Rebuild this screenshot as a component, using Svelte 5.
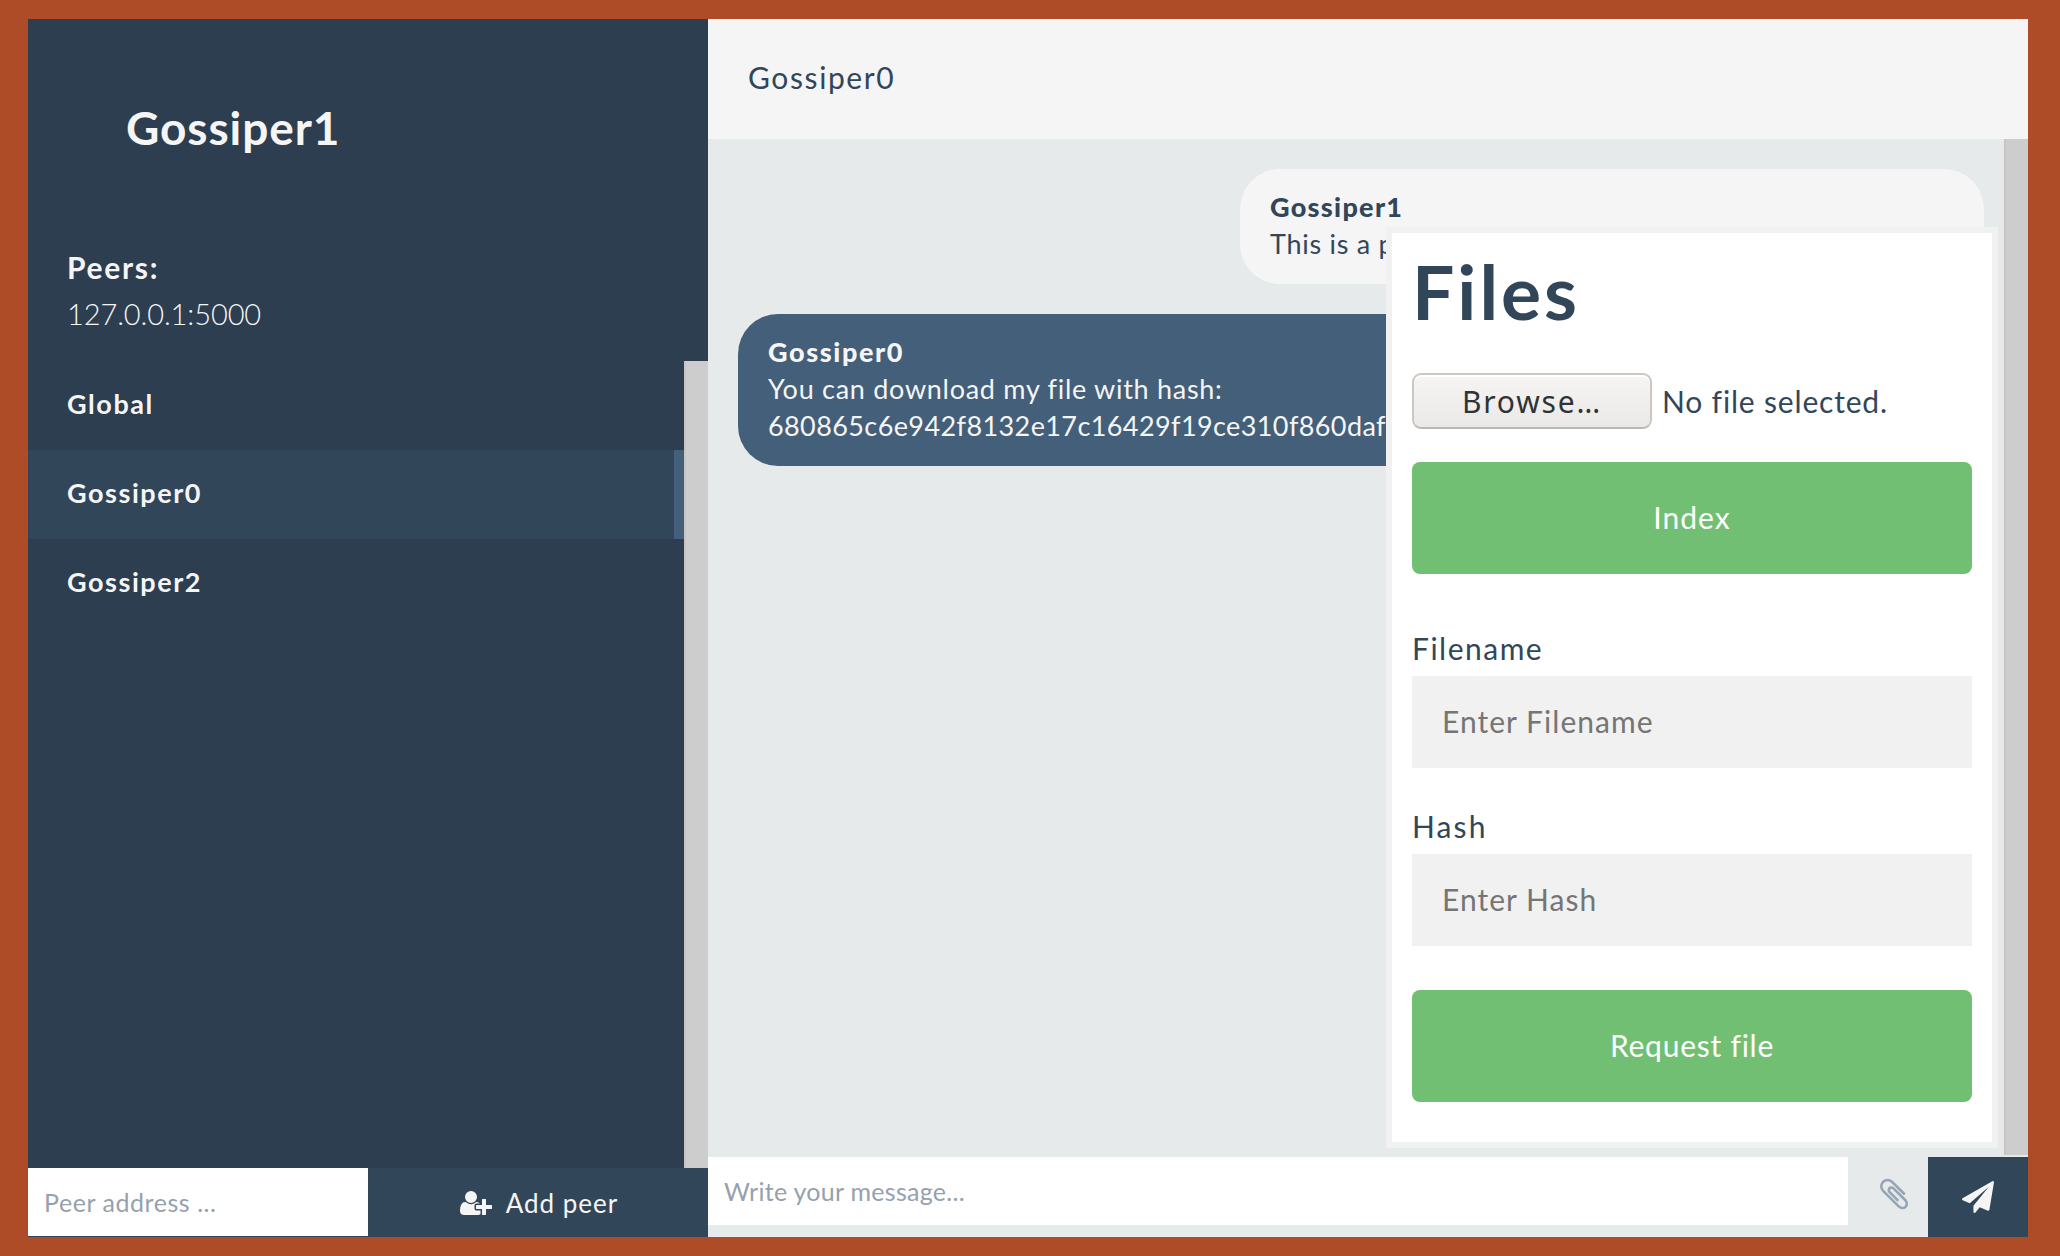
<script>
  const contacts = ['Global', 'Gossiper0', 'Gossiper2'];
  let selected = $state('Gossiper0');
  let peer = $state('');
  let message = $state('');
  let filename = $state('');
  let hash = $state('');
</script>

<div class="frame">
  <aside class="sidebar">
    <header class="profile">
      <h2>Gossiper1</h2>
      <div class="peers">
        <p class="peers-title">Peers:</p>
        <p class="peers-item">127.0.0.1:5000</p>
      </div>
    </header>
    <div class="contacts">
      <ul>
        {#each contacts as name}
          <li>
            <button class="contact" class:active={name === selected} onclick={() => (selected = name)}>{name}</button>
          </li>
        {/each}
      </ul>
      <div class="scrollbar"></div>
    </div>
    <div class="add-peer">
      <input placeholder="Peer address ..." bind:value={peer} />
      <button>
        <svg viewBox="0 0 2048 1792" aria-hidden="true"><path d="M704 896q-159 0-271.500-112.500t-112.500-271.500 112.500-271.500 271.500-112.500 271.500 112.500 112.500 271.500-112.500 271.500-271.500 112.500zM1664 1024h352q13 0 22.500 9.500t9.500 22.500v192q0 13-9.500 22.500t-22.500 9.500h-352v352q0 13-9.500 22.500t-22.500 9.500h-192q-13 0-22.500-9.500t-9.500-22.500v-352h-352q-13 0-22.500-9.500t-9.500-22.500v-192q0-13 9.500-22.500t22.500-9.500h352v-352q0-13 9.500-22.500t22.500-9.500h192q13 0 22.500 9.500t9.500 22.500v352zM928 1248q0 52 38 90t90 38h256v238q-68 50-171 50h-874q-121 0-194-69t-73-190q0-53 3.500-103.500t14-109 26.500-108.500 43-97.500 62-81 85.500-53.500 111.500-20q19 0 39 17 79 61 154.500 91.500t164.500 30.500 164.500-30.500 154.500-91.500q20-17 39-17 132 0 217 96h-223q-52 0-90 38t-38 90v192z" /></svg>
        <span>Add peer</span>
      </button>
    </div>
  </aside>

  <main class="content">
    <header class="topbar">Gossiper0</header>
    <div class="chat">
      <div class="messages">
        <div class="bubble sent">
          <strong>Gossiper1</strong>
          <p>This is a p</p>
        </div>
        <div class="bubble reply">
          <strong>Gossiper0</strong>
          <p>You can download my file with hash:</p>
          <p class="hash">680865c6e942f8132e17c16429f19ce310f860daf</p>
        </div>
      </div>
      <div class="scrollbar"></div>
    </div>
    <div class="composer">
      <input placeholder="Write your message..." bind:value={message} />
      <svg class="clip" viewBox="0 0 1792 1792" aria-hidden="true"><path d="M1596 1385q0 117-79 196t-196 79q-135 0-235-100l-777-776q-113-115-113-271 0-159 110-270t269-111q158 0 273 113l605 606q10 10 10 22 0 16-30.500 46.500t-46.500 30.500q-13 0-23-10l-606-607q-79-77-181-77-106 0-179 75t-73 181q0 105 76 181l776 777q63 63 145 63 64 0 106-42t42-106q0-82-63-145l-581-581q-26-24-60-24-29 0-48 19t-19 48q0 32 25 59l410 410q10 10 10 22 0 16-31 47t-47 31q-12 0-22-10l-410-410q-63-61-63-149 0-82 57-139t139-57q88 0 149 63l581 581q100 98 100 235z" /></svg>
      <button class="send" aria-label="Send">
        <svg viewBox="0 0 1792 1792" aria-hidden="true"><path d="M1764 11q33 24 27 64l-256 1536q-5 29-32 45-14 8-31 8-11 0-24-5l-453-185-242 295q-18 23-49 23-13 0-22-4-19-7-30.500-23.500t-11.500-36.500v-349l864-1059-1069 925-395-162q-37-14-40-55-2-40 32-59l1664-960q15-9 32-9 20 0 36 11z" /></svg>
      </button>
    </div>
    <form class="files" onsubmit={(e) => e.preventDefault()}>
      <h1>Files</h1>
      <div class="picker">
        <button type="button" class="browse">Browse…</button>
        <span>No file selected.</span>
      </div>
      <button type="button" class="action index">Index</button>
      <label for="filename" class="name-label">Filename</label>
      <input id="filename" placeholder="Enter Filename" bind:value={filename} />
      <label for="hash" class="hash-label">Hash</label>
      <input id="hash" placeholder="Enter Hash" bind:value={hash} />
      <button type="button" class="action request">Request file</button>
    </form>
  </main>
</div>

<style>
  :global(body) {
    margin: 0;
    background: #ae4c28;
  }
  * {
    box-sizing: border-box;
  }
  h1, h2, p, ul {
    margin: 0;
    padding: 0;
  }
  ul {
    list-style: none;
  }
  button, input {
    font: inherit;
    letter-spacing: inherit;
    border: 0;
    border-radius: 0;
    outline: 0;
    margin: 0;
  }
  .frame {
    display: flex;
    width: 2000px;
    height: 1218px;
    margin: 19px 32px 19px 28px;
    font-family: Lato, "Open Sans", sans-serif;
    color: #32465a;
  }
  .scrollbar {
    flex: none;
    width: 24px;
    background: #cdcdcd;
    border-left: 2px solid #c9c6c2;
  }

  .sidebar {
    display: flex;
    flex-direction: column;
    width: 680px;
    background: #2c3e50;
    color: #f5f5f5;
  }
  .profile {
    height: 342px;
    padding-top: 79px;
  }
  h2 {
    padding-left: 98px;
    font-size: 46px;
    font-weight: 700;
    line-height: 60px;
    letter-spacing: 0.9px;
  }
  .peers {
    padding: 86px 0 0 39px;
    font-size: 30px;
    line-height: 46px;
  }
  .peers-title {
    font-weight: 700;
    letter-spacing: 1.7px;
  }
  .peers-item {
    padding-top: 1px;
    font-size: 29px;
    font-weight: 300;
    letter-spacing: -0.1px;
  }
  .contacts {
    display: flex;
    flex: 1;
  }
  .contacts ul {
    flex: 1;
  }
  .contact {
    display: block;
    width: 100%;
    height: 89px;
    padding: 0 0 5px 39px;
    background: transparent;
    color: inherit;
    font-size: 27px;
    font-weight: 700;
    letter-spacing: 1.55px;
    text-align: left;
  }
  .contact.active {
    background: #32465a;
    border-right: 10px solid #435f7a;
  }
  .add-peer {
    display: flex;
    height: 69px;
    background: #32465a;
  }
  .add-peer input {
    width: 340px;
    height: 68px;
    padding: 0 16px;
    font-size: 25px;
    letter-spacing: 0.55px;
    background: #fff;
  }
  .add-peer input::placeholder, .composer input::placeholder {
    color: #95a1ae;
    opacity: 1;
  }
  .add-peer button {
    display: flex;
    flex: 1;
    align-items: center;
    justify-content: center;
    gap: 14px;
    padding: 0 0 0 2px;
    background: #32465a;
    color: #f5f5f5;
    font-size: 26px;
    letter-spacing: 1px;
  }
  .add-peer svg {
    width: 32px;
    height: 28px;
    fill: #f5f5f5;
  }

  .content {
    position: relative;
    display: flex;
    flex: 1;
    flex-direction: column;
    background: #e6eaea;
  }
  .topbar {
    height: 120px;
    padding: 0 0 4px 40px;
    background: #f5f5f5;
    font-size: 30px;
    line-height: 116px;
    letter-spacing: 1.6px;
  }
  .chat {
    display: flex;
    height: 1016px;
  }
  .messages {
    display: flex;
    flex: 1;
    flex-direction: column;
    gap: 30px;
    padding: 30px 20px 0 30px;
  }
  .bubble {
    padding: 19px 30px 22px;
    border-radius: 40px;
    font-size: 27px;
    line-height: 37px;
    letter-spacing: 0.72px;
  }
  .bubble strong {
    display: block;
    font-weight: 900;
    letter-spacing: 1.3px;
  }
  .sent {
    align-self: flex-end;
    width: 744px;
    background: #f5f5f5;
  }
  .reply {
    align-self: flex-start;
    width: 744px;
    background: #435f7a;
    color: #f5f5f5;
  }
  .bubble.reply strong {
    letter-spacing: 1.6px;
  }
  .hash {
    letter-spacing: 0.4px;
  }
  .composer {
    display: flex;
    height: 82px;
    padding-top: 2px;
  }
  .composer input {
    width: 1140px;
    height: 68px;
    padding: 0 16px;
    background: #fff;
    font-size: 25px;
    letter-spacing: 0.28px;
  }
  .clip {
    width: 36px;
    height: 36px;
    margin: 19px 16px 0 28px;
    fill: #95a5b3;
  }
  .send {
    display: flex;
    align-items: center;
    justify-content: center;
    width: 100px;
    height: 80px;
    padding: 0;
    background: #32465a;
  }
  .send svg {
    width: 32px;
    height: 32px;
    fill: #f5f5f5;
  }

  /* Popup anchored above the composer */
  .files {
    position: absolute;
    right: 30px;
    bottom: 89px;
    display: flex;
    flex-direction: column;
    width: 612px;
    height: 921px;
    padding: 13px 20px 0;
    background: #fff;
    border: 6px solid #f1f1f1;
    font-size: 30px;
  }
  h1 {
    font-size: 75px;
    font-weight: 700;
    line-height: 90px;
    letter-spacing: 3px;
  }
  .picker {
    display: flex;
    align-items: center;
    gap: 10px;
    height: 56px;
    margin-top: 37px;
    letter-spacing: 0.82px;
  }
  .browse {
    width: 240px;
    height: 56px;
    padding: 0;
    border: 2px solid #cdc7c2;
    border-bottom-color: #bfb8b1;
    border-radius: 9px;
    background: linear-gradient(#f6f5f3, #ebe9e8);
    box-shadow: inset 0 2px 0 #fff;
    color: #2e3436;
    font-family: "Noto Sans", sans-serif;
    font-size: 30px;
    letter-spacing: 1.8px;
  }
  .action {
    height: 112px;
    padding: 0 0 3px;
    border-radius: 8px;
    background: #70bf73;
    color: #fff;
  }
  .index {
    margin-top: 33px;
    letter-spacing: 1.05px;
  }
  .request {
    margin-top: 44px;
    letter-spacing: 0.75px;
  }
  label {
    line-height: 40px;
  }
  .name-label {
    margin-top: 54px;
    letter-spacing: 1.5px;
  }
  .hash-label {
    margin-top: 38px;
    letter-spacing: 2.1px;
  }
  .files input {
    height: 92px;
    margin-top: 8px;
    padding: 0 30px 3px;
    background: #f1f1f1;
    letter-spacing: 1.03px;
  }
  .files input::placeholder {
    color: #757575;
    opacity: 1;
  }
</style>
